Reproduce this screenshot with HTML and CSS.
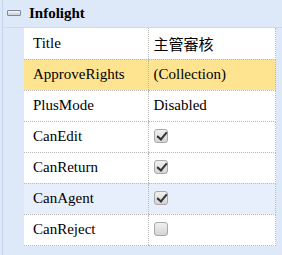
FILE: index.html
```html
<!DOCTYPE html>
<html lang="en">
<head>
  <meta charset="UTF-8">
  <title>Property Grid</title>
  <link rel="stylesheet" href="styles.css">
</head>
<body>
  <div class="grid">
    <div class="grid-inner">
      <!-- category header -->
      <div class="group-head">
        <span class="toggle"></span>
        <span class="group-title">Infolight</span>
      </div>

      <div class="group-body">
        <table class="props">
          <tr>
            <td class="name">Title</td>
            <td class="value cjk">主管審核</td>
          </tr>
          <tr class="selected">
            <td class="name">ApproveRights</td>
            <td class="value">(Collection)</td>
          </tr>
          <tr>
            <td class="name">PlusMode</td>
            <td class="value">Disabled</td>
          </tr>
          <tr>
            <td class="name">CanEdit</td>
            <td class="value"><span class="check checked"></span></td>
          </tr>
          <tr>
            <td class="name">CanReturn</td>
            <td class="value"><span class="check checked"></span></td>
          </tr>
          <tr class="hover">
            <td class="name">CanAgent</td>
            <td class="value"><span class="check checked"></span></td>
          </tr>
          <tr>
            <td class="name">CanReject</td>
            <td class="value"><span class="check"></span></td>
          </tr>
        </table>
      </div>
    </div>
  </div>
</body>
</html>
```

FILE: styles.css
```css
* {
  margin: 0;
  padding: 0;
  box-sizing: border-box;
}

body {
  background: #fff;
  font-family: "Liberation Serif", "Times New Roman", Tinos, "DejaVu Serif", serif;
  font-size: 15px;
  color: #000;
  width: 282px;
  height: 255px;
  overflow: hidden;
}

/* Grid frame: light blue gutter with a thin line near the edge */
.grid {
  border-left: 2px solid #dde8f9;
  background: #dde8f9;
  height: 255px;
}

.grid-inner {
  border-left: 1px solid #c6d4ec;
  height: 100%;
}

.group-head {
  display: flex;
  align-items: center;
  height: 28px;
  padding-left: 4px;
  padding-bottom: 1px;
  border-bottom: 1px solid #cfd9ea;
}

.toggle {
  width: 14px;
  height: 6px;
  border: 1px solid #7d8899;
  border-radius: 1px;
  background: linear-gradient(#f4f6f9, #c9ced6);
  margin-right: 8px;
}

.group-title {
  font-weight: bold;
  font-size: 15px;
}

.group-body {
  padding-left: 21px;
}

.props {
  border-collapse: collapse;
  width: 252px;
  background: #fff;
  font-family: inherit;
}

.props td {
  height: 31px;
  border-bottom: 1px dotted #b8b8b8;
  vertical-align: middle;
  white-space: nowrap;
}

.props .name {
  width: 124px;
  padding-left: 9px;
}

.props .value {
  padding-left: 5px;
  border-left: 1px dotted #b8b8b8;
  border-right: 1px dotted #b8b8b8;
}

.props .cjk {
  font-family: "Liberation Serif", "Noto Sans CJK TC", serif;
}

.props tr.selected td {
  background: #fee391;
}

.props tr.hover td {
  background: #e8effc;
}

/* checkbox */
.check {
  display: inline-block;
  width: 14px;
  height: 14px;
  margin-top: 3px;
  border: 1px solid #a8a8a8;
  border-radius: 3px;
  background: linear-gradient(#f0f0f0, #d4d4d4);
  position: relative;
}

.check.checked::after {
  content: "";
  position: absolute;
  left: 4px;
  top: 0px;
  width: 4px;
  height: 8px;
  border-right: 2px solid #333;
  border-bottom: 2px solid #333;
  transform: rotate(40deg);
}
```
